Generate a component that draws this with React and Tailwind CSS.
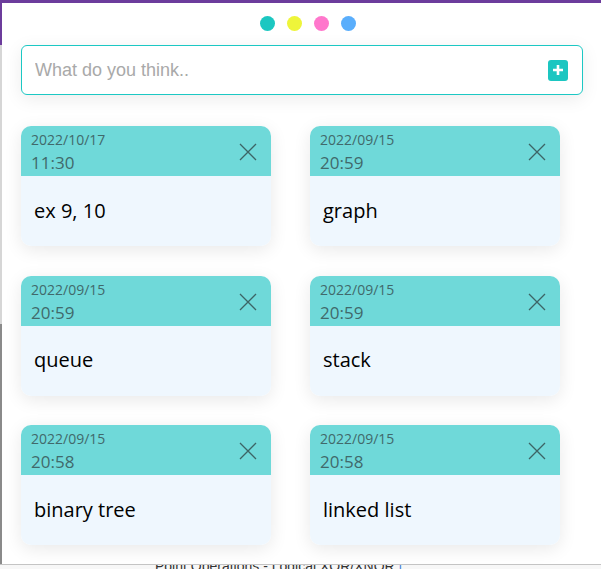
import React from "react";

const notes = [
  { date: "2022/10/17", time: "11:30", text: "ex 9, 10" },
  { date: "2022/09/15", time: "20:59", text: "graph" },
  { date: "2022/09/15", time: "20:59", text: "queue" },
  { date: "2022/09/15", time: "20:59", text: "stack" },
  { date: "2022/09/15", time: "20:58", text: "binary tree" },
  { date: "2022/09/15", time: "20:58", text: "linked list" },
];

const dots = ["bg-[#1cc7c1]", "bg-[#eef53a]", "bg-[#ff77cc]", "bg-[#5aaefc]"];

function CloseIcon() {
  return (
    <svg width="18" height="18" viewBox="0 0 18 18" fill="none">
      <path d="M1 1L17 17M17 1L1 17" stroke="#3d6465" strokeWidth="1.3" />
    </svg>
  );
}

function NoteCard({ note }) {
  return (
    <div className="h-[120px] rounded-[10px] overflow-hidden shadow-[0_4px_18px_rgba(0,0,0,0.09)] flex flex-col">
      <div className="h-[50px] bg-[#6fd9d9] flex justify-between pl-[10px] pr-[14px]">
        <div className="flex flex-col pt-[3px] text-[#41696b]">
          <span className="text-[14px] leading-[22px]">{note.date}</span>
          <span className="text-[17px] leading-[23px]">{note.time}</span>
        </div>
        <div className="pt-[17px]">
          <CloseIcon />
        </div>
      </div>
      <div className="flex-1 bg-[#eff7fe] flex items-center px-[13px] pb-[1px] text-[20px] text-black">
        {note.text}
      </div>
    </div>
  );
}

export default function App() {
  return (
    <div className="w-[601px] h-[569px] overflow-hidden flex flex-col bg-[#f7f7f7] font-['Open_Sans',sans-serif]">
      <div className="h-[3px] bg-[#6c3c9c] shrink-0" />
      <div className="flex h-[561px] shrink-0">
        <div className="w-[2px] flex flex-col">
          <div className="h-[42px] bg-[#6c3c9c]" />
          <div className="flex-1 bg-[#d6d6d6]" />
          <div className="h-[240px] bg-[#8a8a8a]" />
        </div>
        <div className="w-[599px] bg-white pl-[19px] flex flex-col">
          <div className="flex gap-[12px] mt-[13px] ml-[239px]">
            {dots.map((c, i) => (
              <span key={i} className={`w-[15px] h-[15px] rounded-full ${c}`} />
            ))}
          </div>
          <div className="mt-[14px] w-[562px] h-[50px] border border-[#1cc8c4] rounded-[6px] bg-white shadow-[0_4px_18px_rgba(0,0,0,0.08)] flex items-center pl-[13px] pr-[14px]">
            <input
              placeholder="What do you think.."
              className="flex-1 outline-none text-[18px] font-['Liberation_Sans',sans-serif] placeholder:text-[#a9a9a9]"
            />
            <button className="w-[20px] h-[21px] rounded-[3px] bg-[#1cc6c1] flex items-center justify-center">
              <svg width="12" height="12" viewBox="0 0 12 12">
                <path d="M6 1V11M1 6H11" stroke="white" strokeWidth="2.6" />
              </svg>
            </button>
          </div>
          <div className="mt-[31px] grid grid-cols-[250px_250px] gap-x-[39px] gap-y-[29.5px]">
            {notes.map((n, i) => (
              <NoteCard key={i} note={n} />
            ))}
          </div>
        </div>
      </div>
      <div className="h-px bg-[#c4c4c4] shrink-0" />
      <div className="flex-1 overflow-hidden pl-[155px]">
        <div className="-mt-[9px] text-[14px] text-[#333] font-['Liberation_Sans',sans-serif] whitespace-nowrap">
          Point Operations - Logical XOR/XNOR <span className="text-[#4a7fd6]">|</span>
        </div>
      </div>
    </div>
  );
}
